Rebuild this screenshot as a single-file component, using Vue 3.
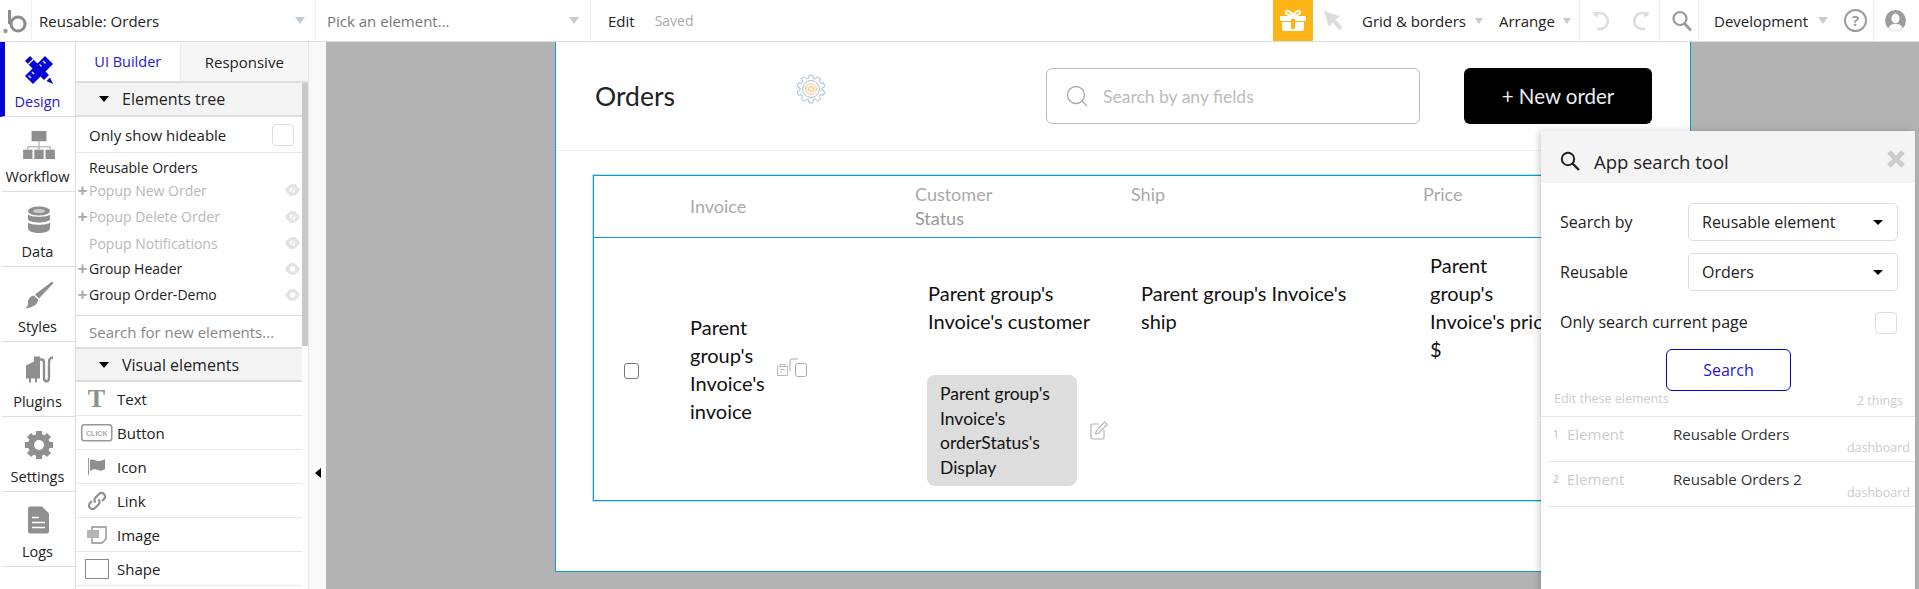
<script setup>
const navTabs = [
  { key: 'design', label: 'Design', active: true },
  { key: 'workflow', label: 'Workflow' },
  { key: 'data', label: 'Data' },
  { key: 'styles', label: 'Styles' },
  { key: 'plugins', label: 'Plugins' },
  { key: 'settings', label: 'Settings' },
  { key: 'logs', label: 'Logs' }
]
const treeItems = [
  { label: 'Popup New Order', plus: true, hidden: true, h: 26 },
  { label: 'Popup Delete Order', plus: true, hidden: true, h: 27 },
  { label: 'Popup Notifications', plus: false, hidden: true, h: 26 },
  { label: 'Group Header', plus: true, hidden: false, h: 25 },
  { label: 'Group Order-Demo', plus: true, hidden: false, h: 27 }
]
const visualItems = ['Text', 'Button', 'Icon', 'Link', 'Image', 'Shape']
const results = [
  { n: 1, name: 'Reusable Orders' },
  { n: 2, name: 'Reusable Orders 2' }
]

function gearPath(cx, cy, outer, inner, teeth) {
  const pts = []
  const step = (Math.PI * 2) / teeth
  for (let i = 0; i < teeth; i++) {
    const a = i * step - Math.PI / 2
    const offs = [
      [-0.5, inner],
      [-0.3, outer],
      [0.3, outer],
      [0.5, inner]
    ]
    for (const [o, r] of offs) {
      const t = a + o * step * 0.72
      pts.push((cx + Math.cos(t) * r).toFixed(2) + ' ' + (cy + Math.sin(t) * r).toFixed(2))
    }
  }
  return 'M' + pts.join('L') + 'z'
}
const gear = gearPath(15, 15, 14, 11, 10)
</script>

<template>
  <div class="app">
    <header class="topbar">
      <div class="logo">
        <svg width="30" height="36" viewBox="0 0 30 36">
          <circle cx="5.500" cy="28" r="2.200" fill="#999" />
          <circle cx="18" cy="21" r="7" fill="none" stroke="#8c8c8c" stroke-width="3" />
          <path stroke="#8c8c8c" stroke-width="3" d="M9.500 7v14" />
        </svg>
      </div>
      <div class="tb-select first">
        <span class="tb-label">Reusable: Orders</span><i class="caret"></i>
      </div>
      <div class="tb-select second">
        <span class="tb-label muted">Pick an element...</span><i class="caret"></i>
      </div>
      <div class="edit-block">
        <span class="tb-label">Edit</span>
        <span class="saved">Saved</span>
      </div>
      <div class="tb-right">
        <div class="gift">
          <svg width="26" height="21" viewBox="0 0 26 21">
            <path fill="none" stroke="#fff" stroke-width="2" d="M13 6C11 1 7 0 6 1.500S8 6 13 6c5 0 8-3 7-4.500S15 1 13 6z" />
            <rect x="0" y="6" width="26" height="5" rx="1" fill="#fff" />
            <path fill="#fff" d="M2 12h22v7a2 2 0 0 1-2 2H4a2 2 0 0 1-2-2z" />
            <rect x="11" y="9" width="4" height="10" fill="#fdb515" />
          </svg>
        </div>
        <svg class="cursor" width="20" height="20" viewBox="0 0 20 20">
          <path fill="#ddd" d="M0 0l16 5-4.500 3.500 7 8-3 3-7-8L5 16z" />
        </svg>
        <span class="tb-label grid">Grid &amp; borders</span><i class="caret small"></i>
        <span class="tb-label arrange">Arrange</span><i class="caret small"></i>
        <div class="tb-cell undo">
          <svg width="20" height="20" viewBox="0 0 20 20"><path fill="none" stroke="#ddd" stroke-width="2.600" d="M3 4.500A8 8 0 1 1 6 17.500" /><path fill="#ddd" d="M1 1h6v6z" /></svg>
          <svg width="20" height="20" viewBox="0 0 20 20"><path fill="none" stroke="#ddd" stroke-width="2.600" d="M17 4.500A8 8 0 1 0 14 17.500" /><path fill="#ddd" d="M19 1h-6v6z" /></svg>
        </div>
        <div class="tb-cell zoomer">
          <svg width="20" height="22" viewBox="0 0 20 22"><circle cx="8" cy="8.500" r="6.500" fill="none" stroke="#9a9a9a" stroke-width="2.200" /><path stroke="#9a9a9a" stroke-width="2.800" d="M12.500 13.500L19 20.500" /></svg>
        </div>
        <div class="dev">
          <span class="tb-label">Development</span><i class="caret"></i>
        </div>
        <div class="help">?</div>
        <div class="tb-cell avatar-cell">
          <svg width="21" height="21" viewBox="0 0 21 21">
            <circle cx="10.500" cy="10.500" r="10.500" fill="#9c9c9c" />
            <ellipse cx="10.500" cy="8.500" rx="4" ry="5" fill="#fff" />
            <path fill="#fff" d="M3.500 18c1-3.500 4-4 7-4s6 .500 7 4a10 10 0 0 1-14 0z" />
          </svg>
        </div>
      </div>
    </header>

    <div class="workspace">
      <nav class="nav">
        <div v-for="t in navTabs" :key="t.key" class="nav-tab" :class="{ active: t.active }">
          <svg v-if="t.key === 'design'" class="nav-icon" width="28" height="28" viewBox="0 0 28 28">
            <path fill="#0404d6" d="M20 0l8 8L8 28l-8-8z" />
            <path stroke="#fff" stroke-width="1.200" d="M18 5l2.500 2.500M14.500 8.500l2 2M7 16l2 2M3.500 19.500l2.500 2.500" />
            <path fill="#fff" d="M5 3l20 20-2 3L2 6z" />
            <path fill="#0404d6" d="M0 5l5-5 19 19-5 5z" />
            <path stroke="#fff" stroke-width="1.200" d="M3 8.500L8.500 3" />
            <path fill="#0404d6" d="M21.500 25l3.500-3.500 3 6.500z" />
          </svg>
          <svg v-else-if="t.key === 'workflow'" class="nav-icon" width="34" height="30" viewBox="0 0 34 30">
            <rect x="9" y="0" width="16" height="11" fill="#8f8f8f" />
            <path fill="none" stroke="#9a9a9a" d="M17 11v9M5 20v-3h24v3" />
            <rect x="0" y="20" width="10" height="10" fill="#8f8f8f" />
            <rect x="12" y="20" width="10" height="10" fill="#8f8f8f" />
            <rect x="24" y="20" width="10" height="10" fill="#8f8f8f" />
          </svg>
          <svg v-else-if="t.key === 'data'" class="nav-icon" width="22" height="27" viewBox="0 0 22 27">
            <ellipse cx="11" cy="4.500" rx="11" ry="4.500" fill="#8f8f8f" />
            <ellipse cx="11" cy="4.500" rx="6" ry="2" fill="#ccc" />
            <path fill="#8f8f8f" d="M0 8c2 3 20 3 22 0v5c-2 4-20 4-22 0zM0 16c2 3 20 3 22 0v6c-1 6-21 6-22 0z" />
          </svg>
          <svg v-else-if="t.key === 'styles'" class="nav-icon" width="30" height="27" viewBox="0 0 30 27">
            <path fill="#8f8f8f" d="M28 0l1.500 1.500L15 17l-4-4z" />
            <path fill="#8f8f8f" d="M10 14l4 4c0 5-5 8-13 9 3-2 3-4 3-6 0-4 3-7 6-7z" />
          </svg>
          <svg v-else-if="t.key === 'plugins'" class="nav-icon" width="30" height="27" viewBox="0 0 30 27">
            <path fill="#8f8f8f" d="M2 9l8-4v-5h6v22h-3v4h-2v-4H7v4H5v-4H2z" />
            <path fill="none" stroke="#8f8f8f" stroke-width="2.400" d="M16 3h2c2 0 2 2 2 4v14c0 5 5 5 5 0V6c0-3 1-5 4-5" />
          </svg>
          <svg v-else-if="t.key === 'settings'" class="nav-icon" width="28" height="28" viewBox="0 0 28 28">
            <circle cx="14" cy="14" r="8" fill="none" stroke="#8f8f8f" stroke-width="6" />
            <path stroke="#8f8f8f" stroke-width="6" d="M14 0v5M14 23v5M0 14h5M23 14h5M4 4l4 4M20 20l4 4M24 4l-4 4M8 20l-4 4" />
          </svg>
          <svg v-else class="nav-icon" width="21" height="27" viewBox="0 0 21 27">
            <path fill="#8f8f8f" d="M2 0h12l7 7v18a2 2 0 0 1-2 2H2a2 2 0 0 1-2-2V2a2 2 0 0 1 2-2z" />
            <path stroke="#fff" stroke-width="1.400" d="M4 11h7M4 16h13M4 21h13" />
          </svg>
          <span class="nav-label">{{ t.label }}</span>
        </div>
      </nav>

      <aside class="panel">
        <div class="panel-main">
          <div class="tabs">
            <div class="tab on">UI Builder</div>
            <div class="tab">Responsive</div>
          </div>
          <div class="panel-body">
            <div class="section-head"><i class="tri"></i>Elements tree</div>
            <div class="hideable">
              <span>Only show hideable</span><i class="box"></i>
            </div>
            <div class="tree">
              <div class="tree-root">Reusable Orders</div>
              <div
                v-for="it in treeItems"
                :key="it.label"
                class="tree-item"
                :class="{ hidden: it.hidden }"
                :style="{ height: it.h + 'px' }"
              >
                <span class="plus">{{ it.plus ? '+' : '' }}</span>
                <span class="tree-name">{{ it.label }}</span>
                <svg class="eye" width="15" height="12" viewBox="0 0 14 11">
                  <path fill="#e3e3e3" d="M0 5.500C3 1 5 0 7 0s4 1 7 5.500C11 10 9 11 7 11S3 10 0 5.500z" />
                  <circle cx="7" cy="5.500" r="2.500" fill="#fff" />
                  <path v-if="it.hidden" stroke="#e3e3e3" stroke-width="1.500" d="M4 11L10 0" />
                </svg>
              </div>
            </div>
            <div class="new-search">Search for new elements...</div>
            <div class="section-head second"><i class="tri"></i>Visual elements</div>
            <div v-for="v in visualItems" :key="v" class="vis-item">
              <span class="vis-icon">
                <span v-if="v === 'Text'" class="t-glyph">T</span>
                <svg v-else-if="v === 'Button'" width="32" height="18" viewBox="0 0 32 18">
                  <rect x=".75" y=".75" width="30" height="16" rx="2.500" fill="#fff" stroke="#999" stroke-width="1.500" />
                  <text x="15.750" y="11.500" text-anchor="middle" class="click">CLICK</text>
                </svg>
                <svg v-else-if="v === 'Icon'" width="20" height="17" viewBox="0 0 20 17">
                  <path stroke="#999" d="M1.500 0v17" />
                  <path fill="#8f8f8f" d="M3 2c4-2 6 2 9 1 2 0 4-1 6-2v10c-3 2-5 2-7 1-3-1-5-1-8 1z" />
                </svg>
                <svg v-else-if="v === 'Link'" width="20" height="20" viewBox="0 0 20 20">
                  <g fill="none" stroke="#8f8f8f" stroke-width="2.200">
                    <path d="M8.500 11.500a3.500 3.500 0 0 1 0-5l3.500-3.500a3.500 3.500 0 0 1 5 5l-2 2" />
                    <path d="M11.500 8.500a3.500 3.500 0 0 1 0 5L8 17a3.500 3.500 0 0 1-5-5l2-2" />
                  </g>
                </svg>
                <svg v-else-if="v === 'Image'" width="20" height="18" viewBox="0 0 20 18">
                  <path fill="#fff" stroke="#8f8f8f" stroke-width="1.400" d="M5 1h14v12l-4 4H5z" />
                  <rect x="0" y="4" width="12" height="8" fill="#b4b4b4" />
                </svg>
                <i v-else class="shape"></i>
              </span>
              <span>{{ v }}</span>
            </div>
          </div>
          <div class="scrollbar"></div>
        </div>
        <div class="gutter"><i class="collapse"></i></div>
      </aside>

      <main class="canvas">
        <section class="page">
          <div class="page-head">
            <h1>Orders</h1>
            <svg class="gear" width="30" height="30" viewBox="0 0 30 30">
              <path :d="gear" fill="#fff" stroke="#9dbdd2" stroke-width="1" />
              <circle cx="15" cy="15" r="8.500" fill="none" stroke="#a5c3d6" stroke-width="1" />
              <circle cx="15" cy="15" r="5.500" fill="#fdf3e2" stroke="#f5cf95" stroke-width="1" />
              <ellipse cx="15" cy="15" rx="2.800" ry="2.200" fill="none" stroke="#eebb72" stroke-width=".8" />
            </svg>
            <div class="search-box">
              <svg width="22" height="22" viewBox="0 0 22 22">
                <circle cx="10" cy="10" r="8.500" fill="none" stroke="#aaa" stroke-width="1.300" />
                <path stroke="#aaa" stroke-width="1.300" d="M16 16l5 5" />
              </svg>
              <span>Search by any fields</span>
            </div>
            <button class="new-btn" type="button">+ New order</button>
          </div>

          <div class="table">
            <div class="t-head">
              <div class="h-invoice">Invoice</div>
              <div>Customer<br /><span class="status">Status</span></div>
              <div>Ship</div>
              <div>Price</div>
            </div>
            <div class="t-row">
              <i class="row-check"></i>
              <div class="c-invoice">Parent<br />group's<br />Invoice's<br />invoice</div>
              <svg class="copy" width="34" height="19" viewBox="0 0 34 19">
                <g fill="none" stroke="#bbb">
                  <path d="M1.500 8.500h10v9h-10zM4 8.500V6.500h5v2M4 11.500h5M4 14h2" />
                  <path d="M14 13V3a2 2 0 0 1 2-2h6" stroke="#aaa" />
                  <rect x="19.500" y="5.500" width="11" height="13" rx="2" stroke="#aaa" />
                </g>
              </svg>
              <div class="c-customer">
                <div>Parent group's<br />Invoice's customer</div>
                <div class="status-line">
                  <div class="pill">Parent group's<br />Invoice's<br />orderStatus's<br />Display</div>
                  <svg width="18" height="19" viewBox="0 0 18 19">
                    <path fill="none" stroke="#b5b5b5" stroke-width="1.200" d="M9 3H2.500A1.500 1.500 0 0 0 1 4.500v12A1.500 1.500 0 0 0 2.500 18h10a1.500 1.500 0 0 0 1.500-1.500V9" />
                    <path fill="none" stroke="#b5b5b5" stroke-width="1.200" d="M5.500 13l1-3.500L14.500 1 17 3.500 9 12z" />
                  </svg>
                </div>
              </div>
              <div class="c-ship">Parent group's Invoice's ship</div>
              <div class="c-price">Parent<br />group's<br />Invoice's price<br />$</div>
            </div>
          </div>
        </section>

        <section class="finder">
          <div class="finder-head">
            <svg width="20" height="20" viewBox="0 0 20 20">
              <circle cx="8" cy="8" r="6.200" fill="none" stroke="#222" stroke-width="2" />
              <path stroke="#222" stroke-width="2.400" d="M12.500 12.500L19 19" />
            </svg>
            <span class="finder-title">App search tool</span>
            <svg class="close" width="18" height="18" viewBox="0 0 18 18">
              <path stroke="#ccc" stroke-width="5" d="M2 2l14 14M16 2L2 16" />
            </svg>
          </div>
          <div class="finder-body">
            <div class="f-row">
              <label>Search by</label>
              <div class="f-select"><span>Reusable element</span><i class="tri small"></i></div>
            </div>
            <div class="f-row">
              <label>Reusable</label>
              <div class="f-select"><span>Orders</span><i class="tri small"></i></div>
            </div>
            <div class="f-check">
              <label>Only search current page</label>
              <i class="box"></i>
            </div>
            <button class="f-btn" type="button">Search</button>
            <span class="f-edit">Edit these elements</span>
            <span class="f-count">2 things</span>
          </div>
          <div class="f-results">
            <div v-for="r in results" :key="r.n" class="f-result">
              <span class="r-n">{{ r.n }}</span>
              <span class="r-type">Element</span>
              <span class="r-name">{{ r.name }}</span>
              <span class="r-page">dashboard</span>
            </div>
          </div>
        </section>
      </main>
    </div>
  </div>
</template>

<style>
html, body { margin: 0; padding: 0; background: #fff; overflow: hidden; }
</style>

<style scoped>
.app {
  width: 1919px;
  height: 589px;
  overflow: hidden;
  font-family: "Open Sans", sans-serif;
  font-size: 14px;
  color: #222;
  display: flex;
  flex-direction: column;
}
i { display: block; font-style: normal; }

/* top bar */
.topbar {
  height: 42px;
  box-sizing: border-box;
  flex: none;
  display: flex;
  align-items: stretch;
  border-bottom: 1px solid #ddd;
  background: #fff;
}
.logo {
  width: 32px;
  box-sizing: border-box;
  border-right: 1px solid #eee;
  display: flex;
  align-items: center;
}
.tb-select {
  box-sizing: border-box;
  display: flex;
  align-items: center;
  justify-content: space-between;
  border-right: 1px solid #eee;
}
.tb-select.first { width: 284px; padding: 0 10px 0 7px; }
.tb-select.second { width: 275px; padding: 0 11px 0 11px; }
.tb-label { font-size: 15px; color: #222; white-space: nowrap; }
.tb-label.muted { color: #777; }
.caret {
  width: 0;
  height: 0;
  flex: none;
  border-left: 5.500px solid transparent;
  border-right: 5.500px solid transparent;
  border-top: 7px solid #c3ccd3;
}
.caret.small { border-left-width: 4.500px; border-right-width: 4.500px; border-top-width: 6px; align-self: center; }
.edit-block {
  display: flex;
  align-items: center;
  padding-left: 17px;
  gap: 20px;
}
.saved { font-size: 14px; color: #aaa; }
.tb-right {
  margin-left: auto;
  display: flex;
  align-items: stretch;
  width: 646px;
  flex: none;
}
.gift {
  width: 40px;
  flex: none;
  background: #fdb515;
  display: flex;
  align-items: center;
  justify-content: center;
}
.cursor { align-self: center; margin-left: 11px; flex: none; }
.grid { align-self: center; margin-left: 18px; width: 105px; flex: none; }
.grid + .caret { margin-left: 8px; }
.arrange { align-self: center; margin-left: 16px; width: 56px; flex: none; }
.arrange + .caret { margin-left: 8px; }
.tb-cell {
  display: flex;
  align-items: center;
  flex: none;
  box-sizing: border-box;
  border-left: 1px solid #e8eef1;
}
.undo { margin-left: 8px; width: 80px; padding-left: 11px; gap: 20px; }
.zoomer { width: 39px; padding-left: 12px; }
.dev {
  box-sizing: border-box;
  width: 146px;
  flex: none;
  display: flex;
  align-items: center;
  padding-left: 15px;
  gap: 10px;
  border-left: 1px solid #e8eef1;
}
.avatar-cell { width: 44px; padding-left: 11px; }
.help {
  flex: none;
  align-self: center;
  margin-right: 6px;
  box-sizing: border-box;
  width: 23px;
  height: 23px;
  border-radius: 50%;
  border: 2px solid #9c9c9c;
  color: #9c9c9c;
  font-weight: 700;
  font-size: 15px;
  line-height: 19px;
  text-align: center;
}

/* workspace */
.workspace { flex: 1; display: flex; min-height: 0; }
.nav {
  width: 76px;
  flex: none;
  box-sizing: border-box;
  border-right: 1px solid #ddd;
}
.nav-tab {
  box-sizing: border-box;
  height: 75px;
  margin-left: 2px;
  border-bottom: 1px solid #ddd;
  display: flex;
  flex-direction: column;
  align-items: center;
  padding-top: 14px;
}
.nav-tab.active {
  margin-left: 0;
  border-left: 5px solid #0404d6;
  padding-right: 3px;
}
.nav-icon { height: 28px; flex: none; }
.nav-label {
  font-size: 14.500px;
  line-height: 18px;
  margin-top: 9px;
  color: #222;
  margin-right: 2px;
}
.active .nav-label { color: #2a16d2; }

.panel { display: flex; width: 250px; flex: none; }
.panel-main { width: 232px; position: relative; }
.tabs { display: flex; height: 41px; box-sizing: border-box; border-bottom: 2px solid #ddd; }
.tab {
  display: flex;
  align-items: center;
  justify-content: center;
  width: 128px;
  background: #f6f6f6;
  border-left: 1px solid #eee;
  font-size: 15px;
}
.tab.on { width: 104px; background: #fff; color: #2a16d2; border-left: none; font-size: 14.500px; }
.panel-body { width: 226px; }
.section-head {
  height: 34px;
  box-sizing: border-box;
  background: #f4f4f4;
  border-bottom: 2px solid #ddd;
  display: flex;
  align-items: center;
  font-size: 16px;
  padding-left: 23px;
}
.section-head.second { height: 33px; }
.tri {
  width: 0;
  height: 0;
  flex: none;
  border-left: 5.500px solid transparent;
  border-right: 5.500px solid transparent;
  border-top: 6.500px solid #000;
  margin-right: 13px;
}
.tri.small { margin-right: 0; border-left-width: 5px; border-right-width: 5px; border-top-width: 5px; }
.hideable {
  height: 36px;
  box-sizing: border-box;
  border-bottom: 1px solid #e6e6e6;
  display: flex;
  align-items: center;
  justify-content: space-between;
  padding: 0 8px 0 13px;
  font-size: 15px;
}
.box {
  width: 22px;
  height: 22px;
  flex: none;
  box-sizing: border-box;
  border: 1px solid #ddd;
  border-radius: 4px;
}
.tree { border-bottom: 1px solid #ddd; padding-bottom: 7px; }
.tree-root { height: 24px; padding: 6px 0 0 13px; box-sizing: border-box; font-size: 14px; line-height: 18px; }
.tree-item {
  display: flex;
  align-items: center;
  font-size: 14px;
  padding-right: 2px;
}
.tree-item.hidden .tree-name { color: #b8b8b8; }
.plus {
  width: 13px;
  text-align: center;
  color: #aaa;
  font-family: "Liberation Sans", sans-serif;
  font-weight: 700;
  font-size: 17px;
  line-height: 1;
}
.tree-name { flex: 1; }
.new-search {
  height: 33px;
  box-sizing: border-box;
  border-bottom: 2px solid #ddd;
  display: flex;
  align-items: center;
  padding-left: 13px;
  color: #888;
  font-size: 15px;
}
.vis-item {
  height: 34px;
  box-sizing: border-box;
  border-bottom: 1px solid #e8e8e8;
  display: flex;
  align-items: center;
  font-size: 15px;
}
.vis-icon {
  width: 41px;
  flex: none;
  display: flex;
  align-items: center;
  justify-content: center;
}
.click {
  font-family: "Liberation Sans", sans-serif;
  font-size: 7px;
  font-weight: 700;
  fill: #aaa;
}
.t-glyph {
  font-family: "Liberation Serif", serif;
  font-weight: 700;
  font-size: 26px;
  line-height: 1;
  color: #8f8f8f;
}
.shape {
  width: 22px;
  height: 18px;
  background: #fff;
  border: 1.500px solid #888;
}
.scrollbar {
  position: absolute;
  left: 226px;
  top: 41px;
  width: 6px;
  height: 263px;
  background: #c9c9c9;
}
.gutter {
  width: 18px;
  box-sizing: border-box;
  background: #f9f9f9;
  border-left: 1px solid #e5e5e5;
  display: flex;
  align-items: center;
  padding: 314px 0 0 6px;
}
.collapse {
  width: 0;
  height: 0;
  border-top: 5.500px solid transparent;
  border-bottom: 5.500px solid transparent;
  border-right: 6px solid #000;
}

/* canvas */
.canvas {
  position: relative;
  flex: 1;
  background: #b3b3b3;
  padding-left: 229px;
  overflow: hidden;
  min-width: 0;
}
.page {
  width: 1136px;
  height: 530px;
  box-sizing: border-box;
  background: #fff;
  border: 1px solid #0e9bcf;
  border-top: none;
}
.page-head {
  height: 109px;
  box-sizing: border-box;
  border-bottom: 1px solid #f0f0f0;
  display: flex;
  align-items: center;
  padding: 0 38px 1px 39px;
  font-family: Lato, sans-serif;
}
.page-head h1 {
  margin: 0;
  width: 201px;
  flex: none;
  font-size: 26.500px;
  font-weight: 400;
  color: #222;
  font-family: Lato, sans-serif;
}
.gear { margin-top: -13px; flex: none; }
.search-box {
  margin-left: 220px;
  width: 374px;
  height: 56px;
  flex: none;
  box-sizing: border-box;
  border: 1px solid #bbb;
  border-radius: 6px;
  display: flex;
  align-items: center;
  padding-left: 19px;
  gap: 15px;
  font-size: 17.500px;
  color: #bbb;
}
.search-box span { margin-top: 1px; }
.new-btn {
  margin-left: 44px;
  width: 188px;
  height: 56px;
  flex: none;
  border: none;
  border-radius: 6px;
  background: #000;
  color: #e9edf1;
  font-family: Lato, sans-serif;
  font-size: 20.500px;
}
.table {
  margin: 24px 0 0 37px;
  width: 1066px;
  height: 326px;
  box-sizing: border-box;
  border: 1px solid #0e9bcf;
  box-shadow: 0 0 0 1px rgba(14, 155, 207, .3);
  font-family: Lato, sans-serif;
}
.t-head {
  height: 62px;
  box-sizing: border-box;
  border-bottom: 1px solid #0e9bcf;
  display: grid;
  grid-template-columns: 225px 216px 292px 1fr;
  font-size: 18px;
  line-height: 24px;
  color: #aaa;
  padding: 6px 0 0 96px;
}
.h-invoice { padding-top: 12px; }
.status { color: #999; }
.t-row {
  display: flex;
  height: 262px;
  font-size: 20px;
  line-height: 28px;
  color: #111;
}
.row-check {
  width: 15px;
  height: 16px;
  flex: none;
  box-sizing: border-box;
  border: 1px solid #777;
  border-radius: 3px;
  margin: 125px 0 0 30px;
}
.c-invoice { width: 86px; margin: 75px 0 0 51px; flex: none; }
.copy { margin: 120px 0 0 0; flex: none; }
.c-customer { width: 213px; margin: 41px 0 0 118px; flex: none; }
.status-line { display: flex; align-items: center; gap: 13px; margin: 40px 0 0 -1px; }
.pill {
  width: 150px;
  height: 111px;
  flex: none;
  box-sizing: border-box;
  background: #ddd;
  border-radius: 8px;
  padding: 7px 13px;
  font-size: 17.500px;
  line-height: 24.500px;
  white-space: nowrap;
}
.c-ship { width: 220px; margin: 41px 0 0 0; flex: none; }
.c-price { width: 130px; margin: 13px 0 0 69px; flex: none; white-space: nowrap; }

/* search tool */
.finder {
  position: absolute;
  left: 1215px;
  top: 89px;
  width: 374px;
  height: 500px;
  background: #fff;
  border-radius: 3px 3px 0 0;
  box-shadow: -2px 0 6px rgba(0,0,0,.2);
}
.finder-head {
  height: 52px;
  box-sizing: border-box;
  background: #f4f4f4;
  display: flex;
  align-items: center;
  padding: 8px 10px 0 19px;
}
.close { margin-top: -4px; }
.finder-title { font-size: 18.500px; margin-left: 14px; flex: 1; color: #222; }
.finder-body { padding: 20px 17px 0 19px; height: 233px; box-sizing: border-box; position: relative; font-size: 16px; color: #222; }
.f-row { display: flex; align-items: center; justify-content: space-between; height: 38px; margin-bottom: 12px; }
.f-select {
  box-sizing: border-box;
  width: 210px;
  height: 38px;
  border: 1px solid #ddd;
  border-radius: 5px;
  display: flex;
  align-items: center;
  justify-content: space-between;
  padding: 0 14px 0 13px;
}
.f-check { display: flex; align-items: center; justify-content: space-between; height: 22px; margin-top: 21px; padding-right: 1px; }
.f-check label { margin-top: -2px; }
.f-btn {
  display: block;
  margin: 15px 0 0 106px;
  width: 125px;
  height: 42px;
  box-sizing: border-box;
  background: #fff;
  border: 1.500px solid #0404d6;
  border-radius: 6px;
  color: #2a16d2;
  font-family: "Open Sans", sans-serif;
  font-size: 16px;
}
.f-edit { position: absolute; left: 13px; top: 207px; font-size: 12.500px; color: #ccc; }
.f-count { position: absolute; right: 12px; top: 209px; font-size: 12.500px; color: #ccc; }
.f-results { border-top: 1px solid #e6e6e6; }
.f-result {
  position: relative;
  height: 45px;
  box-sizing: border-box;
  border-bottom: 1px solid #e6e6e6;
  margin-left: 7px;
  display: flex;
  padding-top: 7px;
  font-size: 15px;
  line-height: 20px;
}
.r-n { width: 19px; padding-left: 5px; box-sizing: border-box; font-size: 10px; color: #bbb; }
.r-type { width: 106px; color: #ccc; }
.r-name { color: #333; }
.r-page { position: absolute; right: 5px; top: 21px; font-size: 12.500px; color: #ccc; }
</style>
